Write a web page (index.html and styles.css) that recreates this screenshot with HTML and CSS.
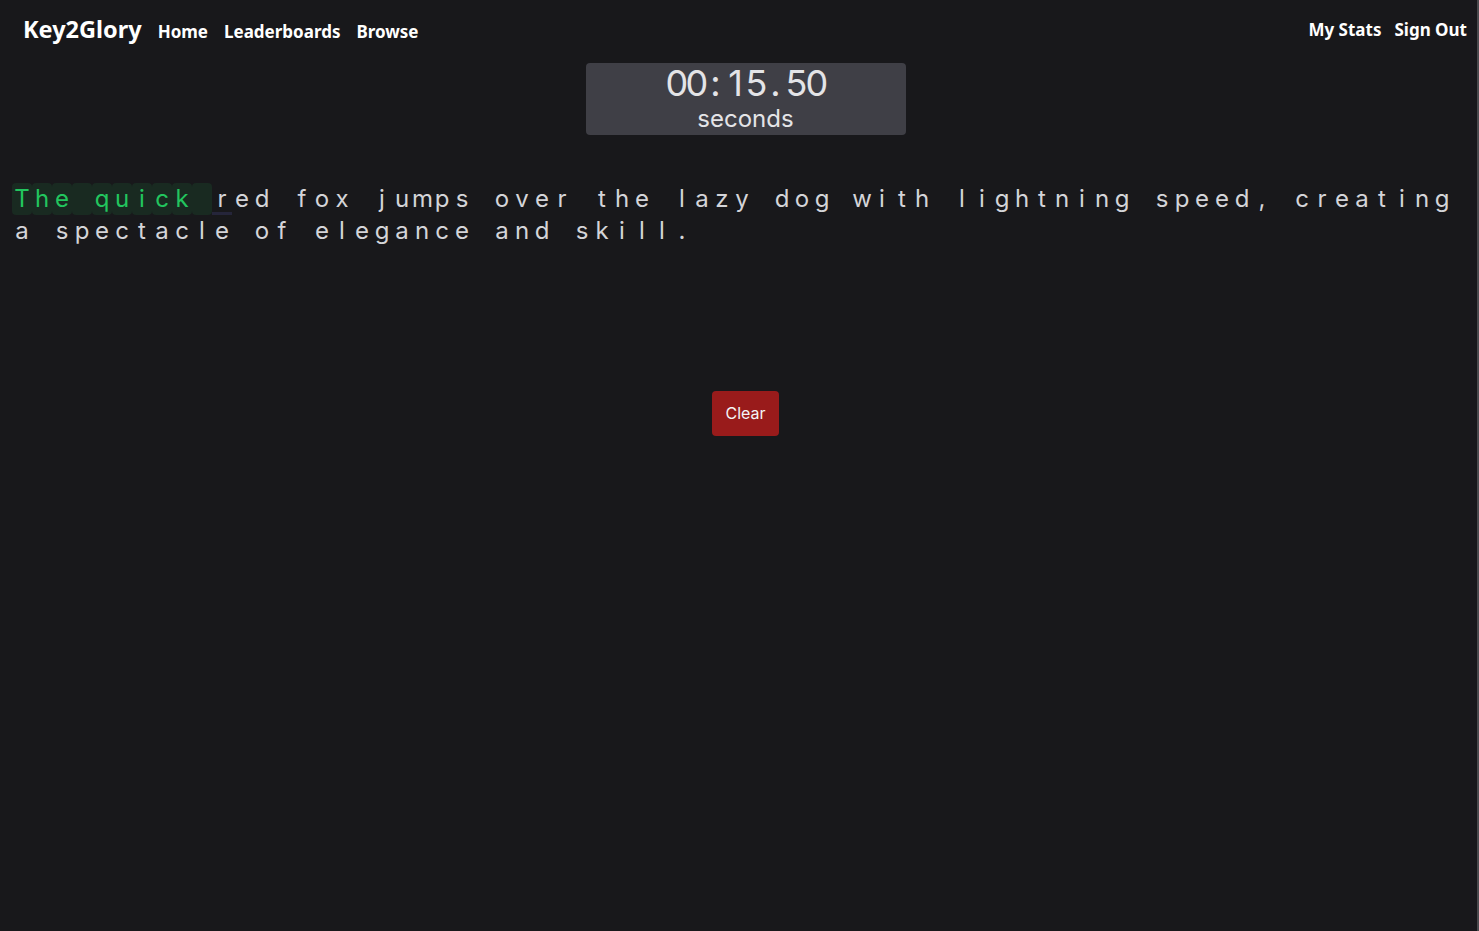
FILE: index.html
```html
<!DOCTYPE html>
<html lang="en">
<head>
<meta charset="utf-8">
<title>Key2Glory</title>
<link rel="stylesheet" href="styles.css">
</head>
<body>
<nav class="nav">
  <div class="nav-left">
    <a class="brand" href="#">Key2Glory</a>
    <a class="nav-link" href="#">Home</a>
    <a class="nav-link" href="#">Leaderboards</a>
    <a class="nav-link" href="#">Browse</a>
  </div>
  <div class="nav-right">
    <a class="nav-link" href="#">My Stats</a>
    <a class="nav-link" href="#">Sign Out</a>
  </div>
</nav>

<main class="main">
  <section class="timer">
    <div class="time"><span class="d">0</span><span class="d">0</span><span class="d">:</span><span class="d">1</span><span class="d">5</span><span class="d">.</span><span class="d">5</span><span class="d">0</span></div>
    <div class="unit">seconds</div>
  </section>

  <div class="passage" id="passage"></div>

  <div class="actions">
    <button class="btn-clear" type="button">Clear</button>
  </div>
</main>
<div class="scroll-edge"></div>
<script src="app.js"></script>
</body>
</html>
```

FILE: app.js
```js
(function () {
  var text = "The quick red fox jumps over the lazy dog with lightning speed, creating a spectacle of elegance and skill.";
  var typed = 10; // "The quick " typed correctly
  var root = document.getElementById("passage");
  var words = text.split(" ");
  var idx = 0;
  words.forEach(function (w, wi) {
    var word = document.createElement("span");
    word.className = "word";
    for (var i = 0; i < w.length; i++) {
      var c = document.createElement("span");
      c.className = "ch" + (idx < typed ? " ok" : "") + (idx === typed ? " cur" : "");
      c.textContent = w[i];
      word.appendChild(c);
      idx++;
    }
    root.appendChild(word);
    if (wi < words.length - 1) {
      var s = document.createElement("span");
      s.className = "ch sp" + (idx < typed ? " ok" : "") + (idx === typed ? " cur" : "");
      s.textContent = "\u00a0";
      root.appendChild(s);
      idx++;
    }
  });
})();
```

FILE: styles.css
```css
html, body {
  margin: 0;
  padding: 0;
  background: #18181b;
}

body {
  font-family: Inter, "Noto Sans", sans-serif;
  color: #d4d4d8;
  min-height: 100vh;
}

.scroll-edge {
  position: fixed;
  top: 0;
  right: 0;
  width: 2px;
  height: 100%;
  background: #4a4a4e;
}

.nav {
  display: flex;
  justify-content: space-between;
  align-items: center;
  height: 58px;
  padding: 0 12px 4px 23px;
  font-family: "Noto Sans", "Open Sans", sans-serif;
  font-weight: 700;
}

.nav-left, .nav-right {
  display: flex;
  align-items: baseline;
}

.nav-left { gap: 16px; }
.nav-right { gap: 13px; }

.nav a {
  color: #ffffff;
  text-decoration: none;
}

.brand {
  font-size: 23.5px;
  letter-spacing: 0;
}

.nav-link {
  font-size: 17px;
  letter-spacing: 0;
}

.main {
  display: flex;
  flex-direction: column;
  padding-left: 12px;
}

.timer {
  align-self: center;
  width: 320px;
  height: 72px;
  margin-top: 1px;
  background: #3f3f46;
  border-radius: 4px;
  display: flex;
  flex-direction: column;
  align-items: center;
  color: #e4e4e7;
}

.time {
  display: flex;
  font-size: 36px;
  line-height: 40px;
  margin-top: 0;
}

.time .d {
  width: 20px;
  text-align: center;
}

.unit {
  font-size: 24px;
  line-height: 26px;
  margin-top: 3px;
}

.passage {
  margin-top: 48px;
  font-size: 24px;
  line-height: 32px;
  color: #d4d4d8;
}

.word {
  white-space: nowrap;
}

.ch {
  display: inline-block;
  width: 20px;
  height: 32px;
  text-align: center;
  vertical-align: top;
  box-sizing: border-box;
}

.ch.ok {
  color: #22c55e;
  background: #192a21;
  border-radius: 4px;
}

.ch.cur {
  box-shadow: inset 0 -3px 0 #25253a;
}

.actions {
  display: flex;
  justify-content: center;
  margin-top: 144px;
}

.btn-clear {
  font-family: Inter, "Liberation Sans", sans-serif;
  font-size: 16px;
  line-height: 25px;
  padding: 10px 13px;
  background: #991b1b;
  color: #f4f4f5;
  border: none;
  border-radius: 4px;
  cursor: pointer;
}
```
